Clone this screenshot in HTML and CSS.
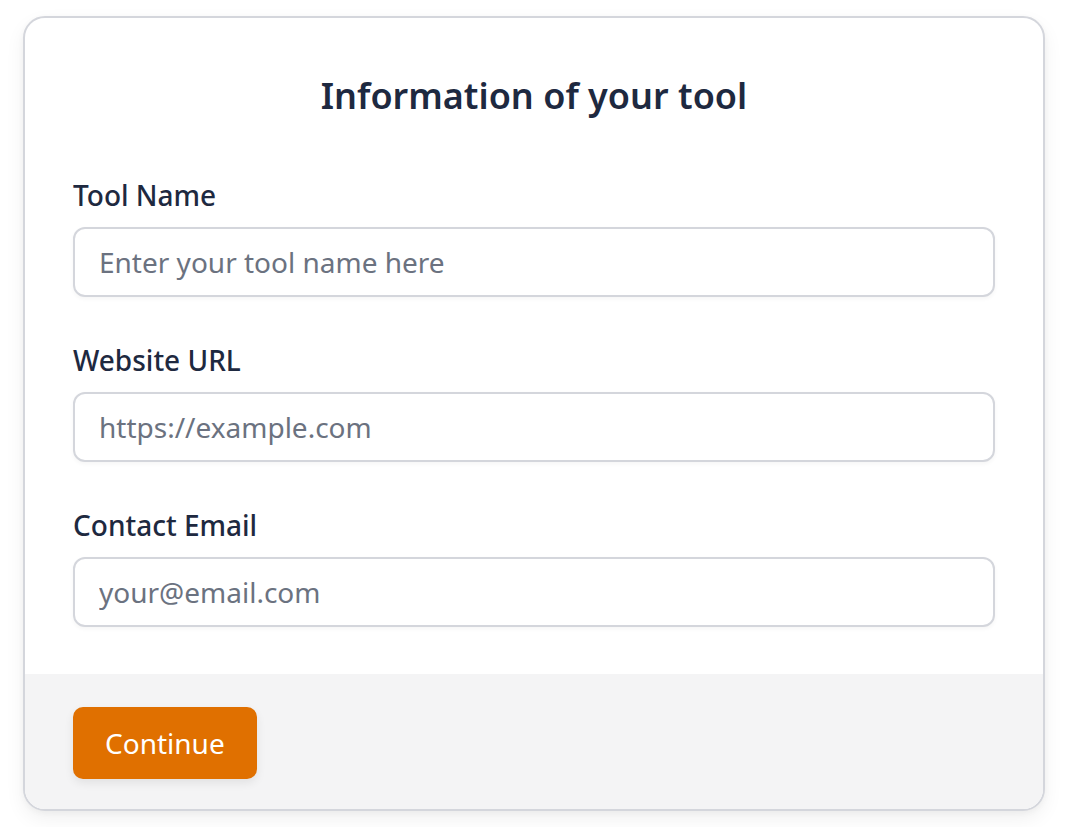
FILE: index.html
```html
<!DOCTYPE html>
<html lang="en">
<head>
  <meta charset="UTF-8">
  <meta name="viewport" content="width=device-width, initial-scale=1.0">
  <title>Tool Information</title>
  <link rel="stylesheet" href="styles.css">
</head>
<body>
  <!-- Formular-Karte -->
  <form class="card" onsubmit="return false">
    <div class="card-body">
      <h1>Information of your tool</h1>

      <div class="field">
        <label for="toolName">Tool Name</label>
        <input type="text" id="toolName" placeholder="Enter your tool name here">
      </div>

      <div class="field">
        <label for="websiteUrl">Website URL</label>
        <input type="url" id="websiteUrl" placeholder="https://example.com">
      </div>

      <div class="field">
        <label for="contactEmail">Contact Email</label>
        <input type="email" id="contactEmail" placeholder="your@email.com">
      </div>
    </div>

    <div class="card-footer">
      <button type="submit">Continue</button>
    </div>
  </form>
</body>
</html>
```

FILE: styles.css
```css
body {
  margin: 0;
  padding: 16px 23px;
  font-family: "Noto Sans", sans-serif;
  background-color: #fff;
  color: #1e293b;
}
.card {
  border: 2px solid #d4d6dc;
  border-radius: 22px;
  overflow: hidden;
  background-color: #fff;
  box-shadow: 0 8px 20px rgba(0, 0, 0, 0.06), 0 2px 6px rgba(0, 0, 0, 0.04);
}
.card-body {
  padding: 50px 48px 47px;
}
h1 {
  margin: 0 0 51px;
  font-size: 36px;
  line-height: 56px;
  font-weight: 600;
  text-align: center;
  color: #1e2940;
}
.field {
  display: flex;
  flex-direction: column;
  gap: 12px;
}
.field + .field {
  margin-top: 43px;
}
label {
  font-size: 28px;
  line-height: 40px;
  font-weight: 500;
  color: #1e2940;
}
input {
  box-sizing: border-box;
  height: 70px;
  padding: 0 24px;
  border: 2px solid #d4d6dc;
  border-radius: 12px;
  font-family: inherit;
  font-size: 28px;
  color: #1e293b;
  background-color: #fff;
  box-shadow: 0 2px 4px rgba(0, 0, 0, 0.04);
  outline: none;
}
input::placeholder {
  color: #6b7280;
}
.card-footer {
  background-color: #f4f4f5;
  padding: 33px 48px 30px;
}
button {
  height: 72px;
  padding: 0 32px;
  border: none;
  border-radius: 10px;
  background-color: #e07000;
  color: #fff;
  font-family: inherit;
  font-size: 28px;
  box-shadow: 0 4px 10px rgba(0, 0, 0, 0.08);
  cursor: pointer;
}
```
